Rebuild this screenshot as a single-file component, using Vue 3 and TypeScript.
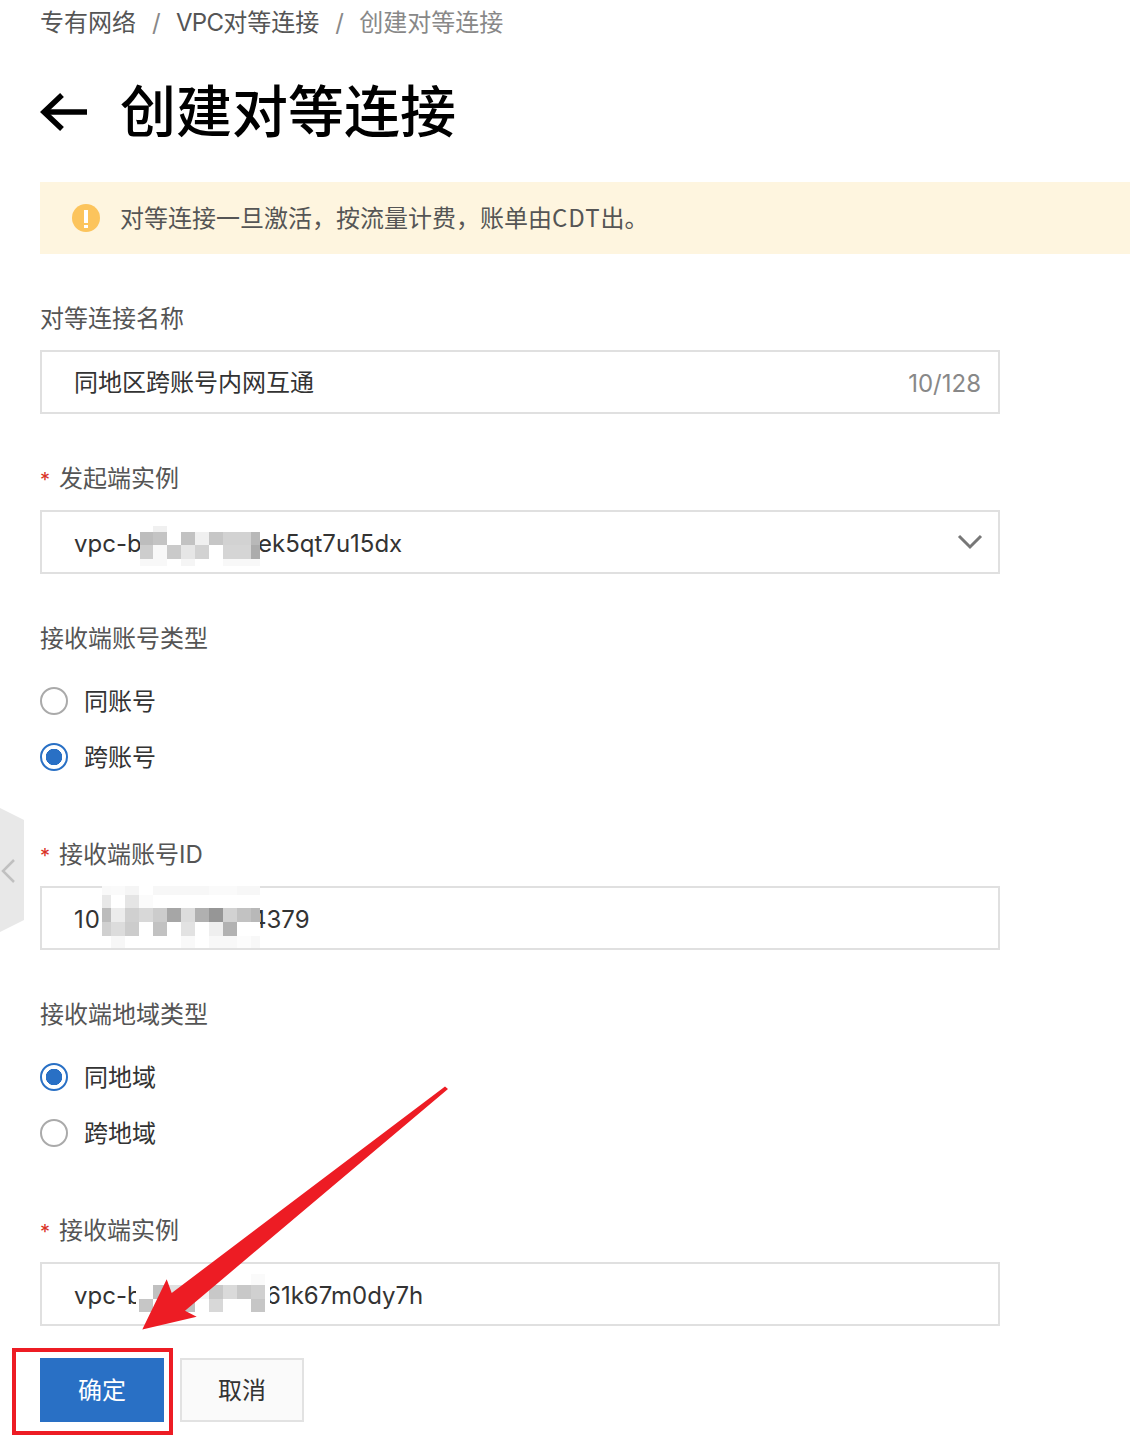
<script setup lang="ts">
type Cell = [number, number, number, number, string]

function rows(list: [number, number, [number, number, string][]][]): Cell[] {
  const out: Cell[] = []
  for (const [y0, y1, cols] of list) {
    for (const [x0, x1, c] of cols) out.push([x0, y0, x1 - x0, y1 - y0, c])
  }
  return out
}

function cellStyle(c: Cell, ox: number, oy: number) {
  return {
    left: `${c[0] - ox}px`,
    top: `${c[1] - oy}px`,
    width: `${c[2]}px`,
    height: `${c[3]}px`,
    background: c[4],
  }
}

const mosaicA = rows([
  [526, 532, [[153, 167, '#f0f0f0']]],
  [532, 545, [[140, 153, '#bdbdbd'], [153, 167, '#c4c4c4'], [167, 181, '#ffffff'], [181, 195, '#c2c2c2'], [195, 209, '#f0f0f0'], [209, 223, '#c6c6c6'], [223, 251, '#d2d2d2'], [251, 260, '#b8b8b8']]],
  [545, 559, [[140, 153, '#cdcdcd'], [153, 167, '#f8f8f8'], [167, 181, '#cacaca'], [181, 195, '#e6e6e6'], [195, 209, '#d2d2d2'], [209, 223, '#ffffff'], [223, 251, '#d5d5d5'], [251, 260, '#acacac']]],
  [559, 566, [[140, 167, '#f8f8f8'], [181, 195, '#f5f5f5'], [223, 260, '#f8f8f8']]],
])

const mosaicB = rows([
  [886, 895, [[102, 111, '#f9f9f9'], [111, 125, '#fafafa'], [125, 139, '#f5f5f5'], [139, 153, '#ffffff'], [153, 209, '#f7f7f7'], [209, 237, '#fafafa'], [237, 260, '#f7f7f7']]],
  [895, 908, [[102, 111, '#e8e8e8'], [111, 125, '#ffffff'], [125, 139, '#e5e5e5'], [139, 153, '#fbfbfb'], [153, 260, '#ffffff']]],
  [908, 922, [[102, 111, '#bcbcbc'], [111, 125, '#ececec'], [125, 139, '#d0d0d0'], [139, 153, '#d8d8d8'], [153, 167, '#cccccc'], [167, 181, '#a6a6a6'], [181, 195, '#dcdcdc'], [195, 209, '#b0b0b0'], [209, 223, '#969696'], [223, 237, '#d2d2d2'], [237, 251, '#c2c2c2'], [251, 260, '#b8b8b8']]],
  [922, 936, [[102, 111, '#d0d0d0'], [111, 125, '#dcdcdc'], [125, 139, '#cccccc'], [139, 153, '#ffffff'], [153, 167, '#c2c2c2'], [167, 181, '#ffffff'], [181, 195, '#e2e2e2'], [195, 209, '#ffffff'], [209, 223, '#efefef'], [223, 237, '#b2b2b2'], [237, 260, '#ffffff']]],
  [936, 948, [[111, 125, '#f7f7f7'], [181, 195, '#f9f9f9'], [209, 237, '#f8f8f8'], [237, 251, '#fcfcfc'], [251, 260, '#f8f8f8']]],
])

const mosaicC = rows([
  [1274, 1285, [[251, 265, '#fafafa']]],
  [1285, 1299, [[136, 153, '#ffffff'], [153, 167, '#c0c0c0'], [167, 195, '#e0e0e0'], [195, 209, '#f5f5f5'], [209, 223, '#c8c8c8'], [223, 237, '#dadada'], [237, 251, '#c8c8c8'], [251, 265, '#d0d0d0'], [265, 270, '#ffffff']]],
  [1299, 1312, [[136, 139, '#ffffff'], [139, 153, '#c6c6c6'], [153, 181, '#ffffff'], [181, 195, '#c0c0c0'], [195, 209, '#ffffff'], [209, 223, '#d8d8d8'], [223, 251, '#ffffff'], [251, 265, '#c6c6c6'], [265, 270, '#ffffff']]],
])

const styledA = mosaicA.map((c) => cellStyle(c, 140, 515))
const styledB = mosaicB.map((c) => cellStyle(c, 102, 891))
const styledC = mosaicC.map((c) => cellStyle(c, 139, 1267))
</script>

<template>
  <div class="page">
    <nav class="crumbs">
      <span>专有网络</span>
      <i class="sep">/</i>
      <span><span class="vpc">VPC</span>对等连接</span>
      <i class="sep">/</i>
      <span class="current">创建对等连接</span>
    </nav>

    <header class="title-row">
      <svg class="back" width="50" height="40" viewBox="0 0 50 40" fill="none" stroke="#000" stroke-width="5.500">
        <path d="M47 20H5" />
        <path d="M22 3 4 20l18 17" />
      </svg>
      <h1>创建对等连接</h1>
    </header>

    <div class="alert">
      <span class="alert-icon"><b></b><b></b></span>
      <span class="alert-text">对等连接一旦激活&#xFF0C;按流量计费&#xFF0C;账单由<span class="cdt">CDT</span>出。</span>
    </div>

    <section class="form">
      <label class="label first">对等连接名称</label>
      <div class="input">
        <span class="cjk-value">同地区跨账号内网互通</span>
        <span class="count">10/128</span>
      </div>

      <label class="label gap"><em>*</em>发起端实例</label>
      <div class="input">
        <span class="head-a">vpc-b</span>
        <span class="mosaic mosaic-a"><i v-for="(s, i) in styledA" :key="i" :style="s"></i></span>
        <span class="tail-a">ek5qt7u15dx</span>
        <svg class="chevron" width="28" height="16" viewBox="0 0 28 16" fill="none" stroke="#777" stroke-width="3">
          <path d="M4 2 15 13 26 2" />
        </svg>
      </div>

      <label class="label gap">接收端账号类型</label>
      <div class="radios">
        <div class="radio"><span class="dot"></span><span class="txt">同账号</span></div>
        <div class="radio on"><span class="dot"></span><span class="txt">跨账号</span></div>
      </div>

      <label class="label gap-r"><em>*</em>接收端账号ID</label>
      <div class="input">
        <span class="head-b">10</span>
        <span class="mosaic mosaic-b"><i v-for="(s, i) in styledB" :key="i" :style="s"></i></span>
        <span class="tail-b">4379</span>
      </div>

      <label class="label gap">接收端地域类型</label>
      <div class="radios">
        <div class="radio on"><span class="dot"></span><span class="txt">同地域</span></div>
        <div class="radio"><span class="dot"></span><span class="txt">跨地域</span></div>
      </div>

      <label class="label gap-r"><em>*</em>接收端实例</label>
      <div class="input">
        <span class="head-c">vpc-b</span>
        <span class="mosaic mosaic-c"><i v-for="(s, i) in styledC" :key="i" :style="s"></i></span>
        <span class="tail-c">61k67m0dy7h</span>
      </div>

      <div class="actions">
        <button class="btn primary" type="button">确定</button>
        <button class="btn" type="button">取消</button>
      </div>
    </section>

    <svg class="side" width="24" height="126" viewBox="0 0 24 126">
      <path d="M0 0 24 12V112L0 124Z" fill="#e8e8e8" />
      <path d="M14 52 3 63l11 11" fill="none" stroke="#c0c0c0" stroke-width="2.500" />
    </svg>

    <svg class="annot-arrow" width="320" height="250" viewBox="140 1082 320 250">
      <path d="M445 1086.500 448 1089 185 1310.700 196.700 1316.700 142.300 1329.500 166.700 1279.300 171.700 1293Z" fill="#ed1c24" />
    </svg>
    <div class="annot-box"></div>
  </div>
</template>

<style scoped>
.page {
  position: relative;
  width: 1130px;
  height: 1440px;
  overflow: hidden;
  padding-left: 40px;
  box-sizing: border-box;
  background: #fff;
  font-family: "Inter", "Noto Sans CJK SC", sans-serif;
  font-size: 24px;
  line-height: 32px;
  color: #333;
}
.crumbs {
  display: flex;
  align-items: center;
  height: 46px;
  gap: 16px;
  color: #555;
}
.crumbs .current {
  color: #888;
}
.vpc {
  letter-spacing: -0.700px;
}
.sep {
  font-style: normal;
  color: #888;
  width: 8px;
  text-align: center;
}
.title-row {
  display: flex;
  align-items: center;
  height: 84px;
  margin-top: 24px;
}
.back {
  flex: none;
  margin-right: 30px;
}
h1 {
  margin: 0;
  font-size: 56px;
  font-weight: 500;
  color: #000;
  line-height: 84px;
}
.alert {
  display: flex;
  align-items: center;
  gap: 20px;
  height: 72px;
  margin-top: 28px;
  padding-left: 32px;
  background: #fef5df;
  color: #555;
}
.alert-text {
  font-family: "Noto Sans CJK SC", sans-serif;
  padding-bottom: 2px;
}
.cdt {
  letter-spacing: 1px;
}
.alert-icon {
  position: relative;
  display: block;
  flex: none;
  width: 28px;
  height: 28px;
  border-radius: 50%;
  background: #fcc45c;
}
.alert-icon b {
  position: absolute;
  left: 12px;
  width: 4px;
  background: #fff;
}
.alert-icon b:first-child {
  top: 6px;
  height: 13px;
}
.alert-icon b:last-child {
  top: 21px;
  height: 3px;
}
.form {
  width: 960px;
}
.label {
  display: block;
  height: 32px;
  line-height: 34px;
  margin-bottom: 16px;
  color: #555;
}
.label.first {
  margin-top: 48px;
}
.label.gap {
  margin-top: 48px;
}
.label.gap-r {
  margin-top: 53px;
}
.label em {
  display: inline-block;
  width: 19px;
  font-style: normal;
  font-size: 20px;
  color: #d93026;
}
.input {
  display: flex;
  align-items: center;
  height: 64px;
  box-sizing: border-box;
  border: 2px solid #e0e0e0;
  padding: 3px 17px 0 32px;
  white-space: nowrap;
}
.cjk-value {
  padding-bottom: 2px;
}
.count {
  margin-left: auto;
  color: #888;
}
.chevron {
  margin-left: auto;
  margin-right: -2px;
  margin-top: -3px;
}
.mosaic {
  position: relative;
  flex: none;
  align-self: stretch;
}
.mosaic i {
  position: absolute;
  display: block;
}
.mosaic-a {
  width: 120px;
}
.mosaic-b {
  width: 158px;
}
.mosaic-c {
  width: 126px;
}
.head-a {
  width: 66px;
}
.tail-a {
  margin-left: -2px;
}
.head-b {
  width: 28px;
  letter-spacing: 1px;
}
.tail-b {
  margin-left: -9px;
}
.head-c {
  width: 65px;
}
.tail-c {
  margin-left: 1px;
}
.radios {
  padding-top: 3px;
}
.radio {
  display: flex;
  align-items: center;
  gap: 16px;
  height: 56px;
  color: #333;
}
.txt {
  padding-top: 2px;
}
.dot {
  flex: none;
  box-sizing: border-box;
  width: 28px;
  height: 28px;
  border: 2px solid #aaa;
  border-radius: 50%;
}
.radio.on .dot {
  border-color: #2970c5;
  background: radial-gradient(circle, #2970c5 8px, #fff 8.500px);
}
.actions {
  display: flex;
  gap: 16px;
  margin-top: 32px;
}
.btn {
  width: 124px;
  height: 64px;
  box-sizing: border-box;
  border: 2px solid #e2e2e2;
  background: #fafafa;
  color: #333;
  font: inherit;
  padding: 2px 0 0;
}
.btn.primary {
  border-color: #2970c5;
  background: #2970c5;
  color: #fff;
}
.side {
  position: absolute;
  left: 0;
  top: 808px;
}
.annot-arrow {
  position: absolute;
  left: 140px;
  top: 1082px;
}
.annot-box {
  position: absolute;
  left: 12px;
  top: 1348px;
  width: 161px;
  height: 87px;
  box-sizing: border-box;
  border: 4px solid #ed1c24;
}
</style>
